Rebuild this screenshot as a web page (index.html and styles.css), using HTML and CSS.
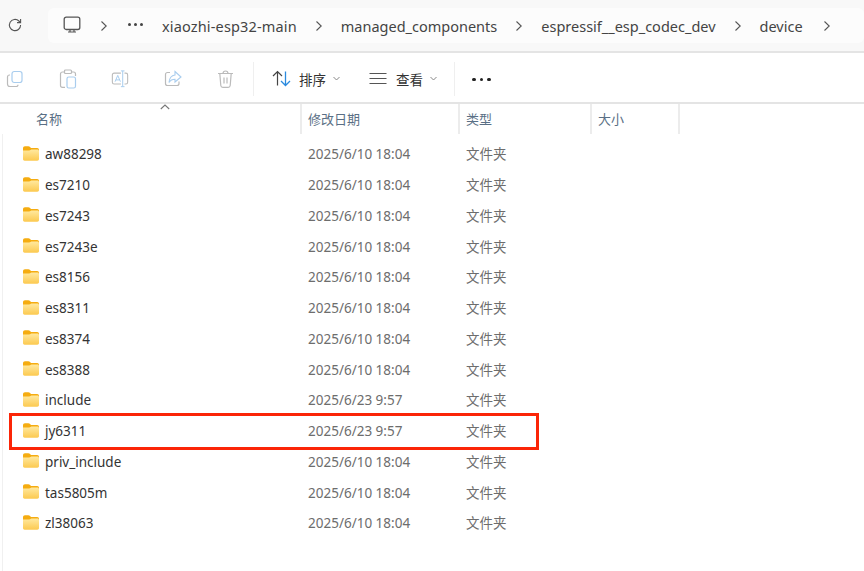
FILE: index.html
```html
<!DOCTYPE html>
<html lang="zh">
<head>
<meta charset="utf-8">
<title>device</title>
<link rel="stylesheet" href="styles.css">
</head>
<body>
<svg class="defs" width="0" height="0" aria-hidden="true">
  <defs>
    <linearGradient id="fg" x1="0" y1="0" x2="0" y2="1"><stop offset="0" stop-color="#ffe9a0"/><stop offset="1" stop-color="#fcc94f"/></linearGradient>
    <symbol id="folder" viewBox="0 0 16 15">
      <path d="M0 2.200C0 1 .8.2 2 .2h3.400c.6 0 1 .2 1.400.6L8 2h6.200C15.300 2 16 2.800 16 4v2H0z" fill="#f5ac10"/>
      <path d="M0 4.600h6.200c.5 0 .9-.2 1.300-.5L8.400 3.400h5.900c1 0 1.700.7 1.700 1.700v8c0 1-.7 1.700-1.700 1.700H1.700C.7 14.800 0 14.100 0 13.100z" fill="url(#fg)"/>
    </symbol>
    <symbol id="chev" viewBox="0 0 8 12"><path d="M1.500 1.500 6.200 6l-4.700 4.500" fill="none" stroke="#555" stroke-width="1.100"/></symbol>
  </defs>
</svg>
<div class="window">
  <header class="addr">
    <svg class="refresh" width="16" height="16" viewBox="0 0 16 16"><path d="M13.600 8a5.600 5.600 0 1 1-1.700-4L13.600 5.600M13.600 2v3.600H10" fill="none" stroke="#555" stroke-width="1.100"/></svg>
    <nav class="crumbs">
      <svg class="pc" width="18" height="18" viewBox="0 0 18 18"><rect x="1.200" y="1.200" width="15.600" height="12.300" rx="2" fill="none" stroke="#555" stroke-width="1.300"/><path d="M5 16h8M7 14v2M11 14v2" stroke="#555" stroke-width="1.200"/></svg>
      <svg class="chev c1"><use href="#chev"/></svg>
      <span class="more"><i></i><i></i><i></i></span>
      <span class="crumb first">xiaozhi-esp32-main</span>
      <svg class="chev"><use href="#chev"/></svg>
      <span class="crumb">managed_components</span>
      <svg class="chev"><use href="#chev"/></svg>
      <span class="crumb">espressif__esp_codec_dev</span>
      <svg class="chev"><use href="#chev"/></svg>
      <span class="crumb">device</span>
      <svg class="chev end"><use href="#chev"/></svg>
    </nav>
  </header>

  <div class="toolbar">
    <div class="tools">
      <svg width="18" height="18" viewBox="0 0 18 18" fill="none"><rect x="6" y="1.500" width="10" height="11" rx="2.200" stroke="#a9cdee" stroke-width="1.200"/><path d="M4 5H3.500C2.300 5 1.500 5.800 1.500 7v7c0 1.300.8 2.500 2.500 2.500h6c1.200 0 2-.8 2-1.800" stroke="#bbb" stroke-width="1.200"/></svg>
      <svg width="18" height="20" viewBox="0 0 18 20" fill="none"><path d="M5 3H3.500C2.300 3 1.500 3.800 1.500 5v11.500c0 1 .8 1.800 2 1.800H6M13 3h1.500C15.700 3 16.500 3.800 16.500 5v2" stroke="#bbb" stroke-width="1.200"/><rect x="5.500" y="1" width="7" height="3.500" rx="1" stroke="#bbb" stroke-width="1.200"/><rect x="8" y="8" width="8.500" height="11" rx="1.800" stroke="#a9cdee" stroke-width="1.200"/></svg>
      <svg width="18" height="18" viewBox="0 0 20 20" fill="none"><path d="M11 3.500H3.500c-1.200 0-2 .8-2 2v8c0 1.200.8 2 2 2H11M15 3.500h1.500c1.200 0 2 .8 2 2v8c0 1.200-.8 2-2 2H15" stroke="#bbb" stroke-width="1.200"/><path d="M4.500 13 7.500 6l3 7M5.500 11h4M11 1h4M11 18.500h4M13 1v17.500" stroke="#a9cdee" stroke-width="1.100"/></svg>
      <svg width="18" height="18" viewBox="0 0 18 18" fill="none"><path d="M6 2.500H3.500c-1.200 0-2 .8-2 2v9c0 1.200.8 2 2 2h9.500c1.200 0 2-.8 2-2v-2" stroke="#bbb" stroke-width="1.200"/><path d="M11 1.500 17 7l-6 5V9.300C8.500 9.300 6.500 10 5 12.500 5.300 8.500 7.500 5.500 11 5z" stroke="#a9cdee" stroke-width="1.100"/></svg>
      <svg width="17" height="18" viewBox="0 0 17 18" fill="none"><path d="M1 3.500h15M6 3.500C6 2 7 1 8.500 1S11 2 11 3.500M2.800 3.500l1 12c.1 1 .8 1.800 2 1.800h5.400c1.200 0 1.900-.8 2-1.800l1-12M7 7.500v6M10 7.500v6" stroke="#bbb" stroke-width="1.200"/></svg>
    </div>
    <div class="menu sort">
      <svg width="20" height="17" viewBox="0 0 20 17" fill="none"><path d="M5.500 15.500V1.500M1 6l4.500-4.500L10 6" stroke="#444" stroke-width="1.200"/><path d="M13.500 1.500v14M9 11l4.500 4.500L18 11" stroke="#2a8ade" stroke-width="1.300"/></svg>
      <span class="menu-label">排序</span>
      <svg class="caret" width="7" height="5" viewBox="0 0 7 5"><path d="M.5 1 3.500 4l3-3" fill="none" stroke="#888"/></svg>
    </div>
    <div class="menu view">
      <svg width="18" height="13" viewBox="0 0 18 13" fill="none"><path d="M.5 1.500h17M.5 6.500h17M.5 11.500h17" stroke="#555" stroke-width="1.100"/></svg>
      <span class="menu-label">查看</span>
      <svg class="caret" width="7" height="5" viewBox="0 0 7 5"><path d="M.5 1 3.500 4l3-3" fill="none" stroke="#888"/></svg>
    </div>
    <div class="menu dots"><i></i><i></i><i></i></div>
  </div>

  <div class="heads">
    <div class="head h-name">名称<svg class="sort-up" width="10" height="6" viewBox="0 0 10 6"><path d="M.8 5 5 1l4.200 4" fill="none" stroke="#777" stroke-width="1.100"/></svg></div>
    <div class="head h-date">修改日期</div>
    <div class="head h-type">类型</div>
    <div class="head h-size">大小</div>
  </div>

  <main class="list">
    <div class="row"><span class="name"><svg class="folder"><use href="#folder"/></svg>aw88298</span><span class="date">2025/6/10 18:04</span><span class="type">文件夹</span></div>
    <div class="row"><span class="name"><svg class="folder"><use href="#folder"/></svg>es7210</span><span class="date">2025/6/10 18:04</span><span class="type">文件夹</span></div>
    <div class="row"><span class="name"><svg class="folder"><use href="#folder"/></svg>es7243</span><span class="date">2025/6/10 18:04</span><span class="type">文件夹</span></div>
    <div class="row"><span class="name"><svg class="folder"><use href="#folder"/></svg>es7243e</span><span class="date">2025/6/10 18:04</span><span class="type">文件夹</span></div>
    <div class="row"><span class="name"><svg class="folder"><use href="#folder"/></svg>es8156</span><span class="date">2025/6/10 18:04</span><span class="type">文件夹</span></div>
    <div class="row"><span class="name"><svg class="folder"><use href="#folder"/></svg>es8311</span><span class="date">2025/6/10 18:04</span><span class="type">文件夹</span></div>
    <div class="row"><span class="name"><svg class="folder"><use href="#folder"/></svg>es8374</span><span class="date">2025/6/10 18:04</span><span class="type">文件夹</span></div>
    <div class="row"><span class="name"><svg class="folder"><use href="#folder"/></svg>es8388</span><span class="date">2025/6/10 18:04</span><span class="type">文件夹</span></div>
    <div class="row"><span class="name"><svg class="folder"><use href="#folder"/></svg>include</span><span class="date">2025/6/23 9:57</span><span class="type">文件夹</span></div>
    <div class="row marked"><span class="name"><svg class="folder"><use href="#folder"/></svg>jy6311</span><span class="date">2025/6/23 9:57</span><span class="type">文件夹</span></div>
    <div class="row"><span class="name"><svg class="folder"><use href="#folder"/></svg>priv_include</span><span class="date">2025/6/10 18:04</span><span class="type">文件夹</span></div>
    <div class="row"><span class="name"><svg class="folder"><use href="#folder"/></svg>tas5805m</span><span class="date">2025/6/10 18:04</span><span class="type">文件夹</span></div>
    <div class="row"><span class="name"><svg class="folder"><use href="#folder"/></svg>zl38063</span><span class="date">2025/6/10 18:04</span><span class="type">文件夹</span></div>
  </main>
</div>
</body>
</html>
```
FILE: styles.css
```css
* { box-sizing: border-box; }
html, body { margin: 0; height: 100%; background: #fff; overflow: hidden; }
body { font-family: "Noto Sans", "Noto Sans CJK SC", sans-serif; font-size: 13.5px; color: #333; }
.defs { position: absolute; }
.window { width: 864px; height: 571px; display: flex; flex-direction: column; }

.addr { height: 53px; flex: none; display: flex; align-items: flex-start; background: #f8f8f8; border-bottom: 2px solid #e4e4e4; padding: 8px 0 0 7px; }
.refresh { margin: 9px 25px 0 0; flex: none; }
.crumbs { width: 816px; height: 35px; background: #fcfcfc; border-radius: 6px; display: flex; align-items: center; padding-left: 15px; color: #444; font-size: 14.5px; white-space: nowrap; }
.pc { flex: none; margin-top: -2px; }
.chev { width: 8px; height: 12px; flex: none; margin: 0 18px; }
.chev.c1 { margin: 0 20px 0 19px; }
.chev.end { margin-left: 20px; }
.first { letter-spacing: .15px; }
.more { display: flex; gap: 3px; width: 15px; margin-right: 19px; margin-top: -2px; }
.more i { width: 3px; height: 3px; border-radius: 50%; background: #444; }

.toolbar { height: 51px; flex: none; display: flex; align-items: center; border-bottom: 2px solid #e4e4e4; padding-top: 2px; }
.tools { width: 254px; height: 34px; display: flex; align-items: center; gap: 34.7px; padding-left: 6px; border-right: 1px solid #efefef; flex: none; }
.tools svg { flex: none; }
.menu { display: flex; align-items: center; height: 34px; flex: none; }
.menu-label { font-size: 13.5px; color: #333; }
.sort { width: 115px; padding-left: 18px; }
.sort .menu-label { margin-left: 7px; }
.view { width: 86px; border-right: 1px solid #efefef; }
.view .menu-label { margin-left: 9px; }
.caret { margin-left: 7px; }
.dots { padding: 2px 0 0 17px; gap: 4px; }
.dots i { width: 3.5px; height: 3.5px; border-radius: 50%; background: #222; }

.heads { height: 30px; flex: none; display: grid; grid-template-columns: 302px 158px 132px 88px; color: #5a6f85; font-size: 13px; }
.head { position: relative; padding-left: 6px; line-height: 30px; border-right: 2px solid #ececec; }
.h-name { padding-left: 36px; }
.sort-up { position: absolute; left: 160px; top: 0; }

.list { flex: 1; margin-left: 2px; padding-top: 5px; border-left: 1px solid #f0f0f0; }
.row { height: 30.75px; display: grid; grid-template-columns: 299px 158px auto; align-items: center; color: #6d6d6d; position: relative; }
.name { display: flex; align-items: center; padding-left: 19px; color: #333; }
.folder { width: 16px; height: 15px; margin: -2px 6px 0 1px; flex: none; }
.date { padding-left: 6px; }
.type { padding-left: 6px; font-size: 13.5px; margin-top: -2px; }
.marked::after { content: ""; box-sizing: border-box; position: absolute; left: 6px; top: -3px; width: 530px; height: 37px; border: 3px solid #fb2507; }
```
